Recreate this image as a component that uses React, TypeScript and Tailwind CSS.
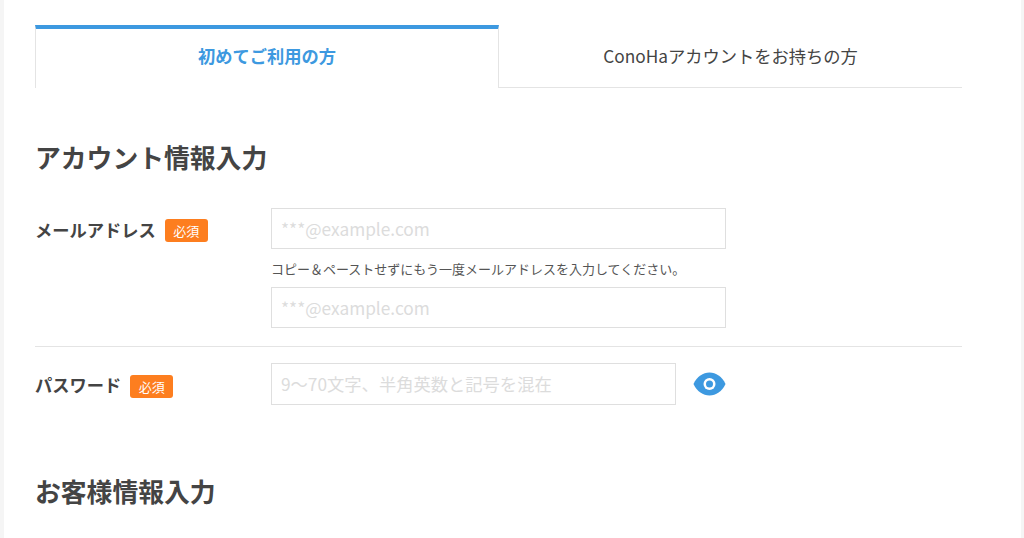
import React from "react";

const font = { fontFamily: '"Noto Sans CJK JP", "Noto Sans", sans-serif' };

function Required() {
  return (
    <span className="mt-[2px] flex h-[23px] w-[43px] items-center justify-center rounded-[3px] bg-[#fd7e1f] text-[13px] leading-none text-white">
      必須
    </span>
  );
}

function Field({ placeholder, className }: { placeholder: string; className: string }) {
  return (
    <div
      className={`flex items-center border border-[#dfdfdf] bg-white pl-[9px] text-[17.3px] leading-none text-[#dcdcdc] ${className}`}
    >
      {placeholder}
    </div>
  );
}

function Eye() {
  return (
    <svg width="33" height="24" viewBox="0 0 33 24">
      <path d="M0.5 12C4 4.5 10 0.5 16.5 0.5S29 4.5 32.5 12C29 19.5 23 23.5 16.5 23.5S4 19.5 0.5 12Z" fill="#3d99e0" />
      <circle cx="16.5" cy="12" r="6" fill="#fff" />
      <circle cx="16.5" cy="12" r="3.5" fill="#3d99e0" />
    </svg>
  );
}

export default function App() {
  return (
    <div className="h-[538px] overflow-hidden bg-[#f5f5f5] pl-[4px] pr-[3px] text-[#444]" style={font}>
      <div className="h-full bg-white pl-[31px] pr-[59px] pt-[25px]">
        {/* Tabs */}
        <div className="flex h-[63px]">
          <div className="flex w-[464px] items-center justify-center border-x border-[#e4e4e4] border-t-4 border-t-[#3d99e0] pb-[5px] text-[17.25px] font-bold text-[#3d99e0]">
            初めてご利用の方
          </div>
          <div className="flex flex-1 items-center justify-center border-b border-[#e4e4e4] pb-[1px] text-[17.25px] text-[#444]">
            ConoHaアカウントをお持ちの方
          </div>
        </div>

        <h2 className="mt-[49px] h-[39px] text-[25.8px] font-bold leading-[39px]">アカウント情報入力</h2>

        {/* Mail */}
        <div className="mt-[32px] flex border-b border-[#e4e4e4] pb-[18px]">
          <div className="flex h-[43px] w-[236px] items-center gap-[9px]">
            <span className="text-[17.25px] font-bold leading-none">メールアドレス</span>
            <Required />
          </div>
          <div className="flex flex-col">
            <Field placeholder="***@example.com" className="h-[41px] w-[455px]" />
            <p className="flex h-[38px] items-center text-[13px] leading-none text-[#555]">
              コピー＆ペーストせずにもう一度メールアドレスを入力してください。
            </p>
            <Field placeholder="***@example.com" className="h-[41px] w-[455px]" />
          </div>
        </div>

        {/* Password */}
        <div className="mt-[16px] flex">
          <div className="flex h-[44px] w-[236px] items-center gap-[9px]">
            <span className="text-[17.25px] font-bold leading-none">パスワード</span>
            <Required />
          </div>
          <Field placeholder="9〜70文字、半角英数と記号を混在" className="h-[42px] w-[405px]" />
          <div className="ml-[17px] flex h-[42px] items-center">
            <Eye />
          </div>
        </div>

        <h2 className="mt-[64px] text-[25.8px] font-bold leading-[39px]">お客様情報入力</h2>
      </div>
    </div>
  );
}
